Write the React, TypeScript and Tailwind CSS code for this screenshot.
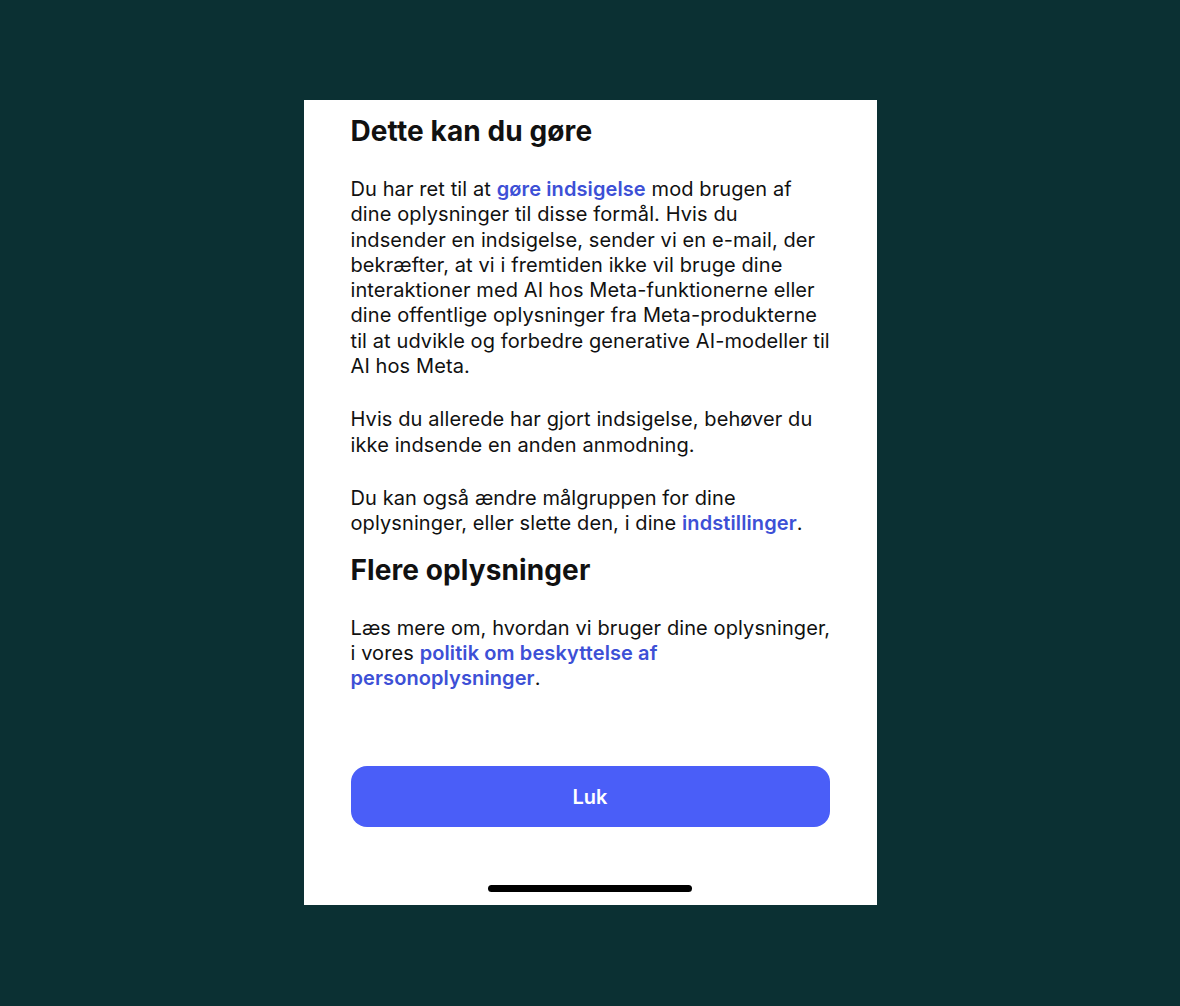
import React from 'react'

const Link = ({ children }: { children: React.ReactNode }) => <span className="font-semibold text-[#3d50d6]">{children}</span>

export default function App() {
  return (
    <div className="flex min-h-[1006px] w-full items-start justify-center bg-[#0b3033] pt-[100px] font-['Inter','Noto_Sans',sans-serif]">
      <div className="flex h-[805px] w-[573px] flex-col bg-white px-[47px] pt-[14px] text-[#111]">
        <h1 className="text-[28px] leading-[34px] font-bold tracking-[0.1px]">Dette kan du gøre</h1>
        <div className="mt-[29px] mr-[-3px] flex flex-col gap-[28px] text-[20px] leading-[25.3px] tracking-[0.1px]">
          <p>
            Du har ret til at <Link>gøre indsigelse</Link> mod brugen af dine oplysninger til disse formål. Hvis du indsender en indsigelse, sender vi en
            e-mail, der bekræfter, at vi i fremtiden ikke vil bruge dine interaktioner med AI hos Meta-funktionerne eller dine offentlige oplysninger fra
            Meta-produkterne til at udvikle og forbedre generative AI-modeller til AI hos Meta.
          </p>
          <p>Hvis du allerede har gjort indsigelse, behøver du ikke indsende en anden anmodning.</p>
          <p>
            Du kan også ændre målgruppen for dine oplysninger, eller slette den, i dine <Link>indstillinger</Link>.
          </p>
        </div>
        <h2 className="mt-[16px] text-[28px] leading-[34px] font-bold tracking-[0.1px]">Flere oplysninger</h2>
        <p className="mt-[29px] mr-[-3px] text-[20px] leading-[25.3px] tracking-[0.1px]">
          Læs mere om, hvordan vi bruger dine oplysninger, i vores <Link>politik om beskyttelse af personoplysninger</Link>.
        </p>
        <button className="mt-auto h-[61px] w-full rounded-[16px] bg-[#4a5ef8] text-[20px] font-semibold text-white">Luk</button>
        <div className="mt-[58px] mb-[13px] flex justify-center">
          <div className="h-[7px] w-[204px] rounded-full bg-black" />
        </div>
      </div>
    </div>
  )
}
